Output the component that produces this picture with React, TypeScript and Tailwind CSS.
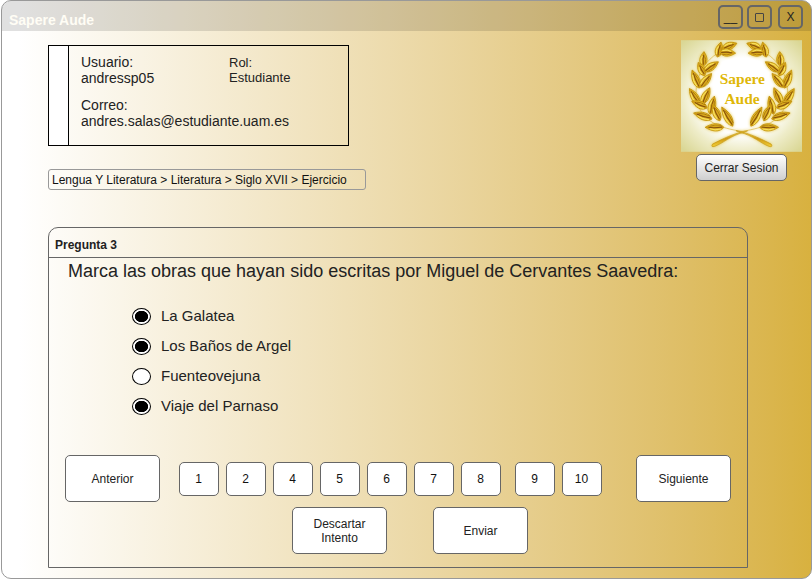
import { useState } from "react";

const LEAVES: [number, number, number, number][] = [
  [143, 148, -76, 46],
  [174, 137, -20, 46],
  [168, 157, 4, 48],
  [96, 176, -86, 44],
  [90, 206, -116, 44],
  [119, 199, -34, 52],
  [73, 236, -112, 58],
  [103, 240, -50, 54],
  [69, 288, -122, 56],
  [103, 286, -64, 54],
  [84, 312, -156, 50],
  [122, 314, -76, 56],
  [94, 346, -162, 58],
  [134, 336, -114, 54],
  [129, 380, 180, 56],
  [167, 348, -120, 66],
];

function Leaf({ x, y, angle, length }: { x: number; y: number; angle: number; length: number }) {
  const h = length / 2;
  return (
    <g transform={`translate(${x} ${y}) rotate(${angle})`}>
      <path
        d={`M${-h} 0C${-h / 2} -16 ${h / 4} -13 ${h} 0C${h / 4} 13 ${-h / 2} 16 ${-h} 0Z`}
        fill="url(#leafGold)"
        stroke="#c4940c"
        strokeWidth="2.5"
      />
      <path d={`M${-h + 5} 1Q0 -3 ${h - 10} 0`} fill="none" stroke="#84500a" strokeWidth="3" />
      <path d={`M${-h + 8} 6Q0 9 ${h - 14} 3`} fill="none" stroke="#a8740c" strokeWidth="2.5" />
      <path d={`M${-h + 8} -5Q0 -10 ${h - 14} -4`} fill="none" stroke="#fbe56a" strokeWidth="2.5" />
    </g>
  );
}

function Branch() {
  return (
    <g>
      <path
        d="M216 393C160 384 100 372 78 310C66 262 78 190 150 152"
        fill="none"
        stroke="#d8b440"
        strokeWidth="2"
      />
      {LEAVES.map(([x, y, angle, length]) => (
        <Leaf key={`${x}-${y}`} x={x} y={y} angle={angle} length={length} />
      ))}
      <path
        d="M228 390C190 396 150 416 123 430Q117 440 129 437C154 428 178 404 216 395Z"
        fill="url(#leafGold)"
        stroke="#c4940c"
        strokeWidth="2"
      />
    </g>
  );
}

function Logo() {
  return (
    <svg viewBox="29 120 361 333" className="h-[112px] w-[121px]" role="img" aria-label="Sapere Aude">
      <defs>
        <radialGradient id="glow" cx="50%" cy="50%" r="68%">
          <stop offset="0.5" stopColor="#ffffff" />
          <stop offset="0.72" stopColor="#eeecc8" />
          <stop offset="1" stopColor="#dad795" />
        </radialGradient>
        <linearGradient id="leafGold" x1="0" y1="0" x2="0" y2="1">
          <stop offset="0" stopColor="#f7dc45" />
          <stop offset="0.5" stopColor="#cf9a14" />
          <stop offset="1" stopColor="#f2ce36" />
        </linearGradient>
        <filter id="halo" x="-10%" y="-10%" width="120%" height="120%">
          <feDropShadow dx="0" dy="0" stdDeviation="4" floodColor="#e6c84a" />
        </filter>
      </defs>
      <rect x="29" y="120" width="361" height="333" fill="url(#glow)" />
      <g filter="url(#halo)">
        <Branch />
        <g transform="translate(421 0) scale(-1 1)">
          <Branch />
        </g>
      </g>
      <g fill="#dfb808" fontFamily="Liberation Serif, serif" fontWeight="700" fontSize="46" textAnchor="middle">
        <text x="212" y="251">Sapere</text>
        <text x="211" y="311">Aude</text>
      </g>
    </svg>
  );
}

const OPTIONS = ["La Galatea", "Los Baños de Argel", "Fuenteovejuna", "Viaje del Parnaso"];

const ACTION =
  "h-[47px] w-[95px] shrink-0 rounded-[5px] border border-[#666] bg-white px-4 text-[12px] leading-[14px] text-[#222]";
const PAGE = "h-[34px] w-10 rounded-[5px] border border-[#666] bg-white text-[12px] leading-[14px] text-[#111]";
const CONTROL =
  "flex h-6 w-[25px] items-center justify-center rounded-[5px] border-2 border-[#666] text-[12px] leading-[14px] text-[#222]";

function PageButtons({ pages }: { pages: number[] }) {
  return (
    <div className="flex gap-[7px]">
      {pages.map((n) => (
        <button key={n} type="button" className={PAGE}>
          {n}
        </button>
      ))}
    </div>
  );
}

export default function App() {
  const [marked, setMarked] = useState([true, true, false, true]);
  const toggle = (i: number) => setMarked(marked.map((m, k) => (k === i ? !m : m)));

  return (
    <div className="bg-white pl-px font-['Liberation_Sans',Arial,sans-serif] text-[#222]">
      <div className="overflow-hidden rounded-[10px] border border-[#999] bg-linear-to-r from-white from-2% to-[#d8b13f] pb-[10px]">
        <header className="flex h-[30px] items-center justify-between bg-black/12 pt-[2px] pr-2 pl-[7px]">
          <h1 className="pt-[6px] text-[14px] leading-4 font-bold text-[#fffdf5]">Sapere Aude</h1>
          <div className="flex gap-1">
            <button type="button" aria-label="Minimizar" className={CONTROL}>
              __
            </button>
            <button type="button" aria-label="Maximizar" className={CONTROL}>
              <span className="size-[9px] rounded-[1px] border border-[#444]" />
            </button>
            <button type="button" aria-label="Cerrar" className={`${CONTROL} ml-[2px]`}>
              X
            </button>
          </div>
        </header>

        <main className="pr-[9px] pl-[46px]">
          <div className="flex items-start justify-between">
            <div className="pt-[14px]">
              <section className="flex h-[101px] w-[301px] border border-black">
                <div className="w-5 shrink-0 border-r border-black bg-white" />
                <div className="flex-1 pt-2 pl-3">
                  <div className="flex items-end">
                    <p className="w-[148px] text-[14px] leading-4">
                      Usuario:
                      <br />
                      andressp05
                    </p>
                    <p className="pb-px text-[13px] leading-[15px]">
                      Rol:
                      <br />
                      Estudiante
                    </p>
                  </div>
                  <p className="pt-[11px] text-[14px] leading-4">
                    Correo:
                    <br />
                    andres.salas@estudiante.uam.es
                  </p>
                </div>
              </section>
              <nav
                aria-label="Ruta"
                className="mt-[23px] h-[21px] w-[318px] rounded-[3px] border border-[#999] pl-[3px] text-[12px] leading-5 text-[#111]"
              >
                Lengua Y Literatura &gt; Literatura &gt; Siglo XVII &gt; Ejercicio
              </nav>
            </div>
            <div className="flex flex-col items-center gap-[2px] pt-[9px]">
              <Logo />
              <button
                type="button"
                className="h-[27px] w-[91px] rounded-[5px] border border-[#666] bg-linear-to-b from-white to-[#cfcfcf] text-[12px] leading-[14px]"
              >
                Cerrar Sesion
              </button>
            </div>
          </div>

          <section className="mt-[37px] mr-[54px] rounded-t-[10px] border border-[#666] pb-[13px]">
            <h2 className="h-[30px] border-b border-[#666] pt-[10px] pl-[6px] text-[12px] leading-[14px] font-bold">
              Pregunta 3
            </h2>
            <fieldset>
              <legend className="pt-[3px] pl-[19px] text-[18px] leading-5">
                Marca las obras que hayan sido escritas por Miguel de Cervantes Saavedra:
              </legend>
              <div className="flex flex-col items-start pt-5 pl-[83px]">
                {OPTIONS.map((option, i) => (
                  <label key={option} className="flex h-[30px] items-center gap-[10px] text-[15px] leading-[18px]">
                    <input
                      type="checkbox"
                      checked={marked[i]}
                      onChange={() => toggle(i)}
                      className="h-[17px] w-[19px] appearance-none rounded-[50%] border border-black bg-white bg-radial-[7px_6px_at_center] from-white from-90% to-white checked:from-black"
                    />
                    {option}
                  </label>
                ))}
              </div>
            </fieldset>

            <div className="flex items-center justify-between pt-[34px] pr-4 pl-4">
              <button type="button" className={ACTION}>
                Anterior
              </button>
              <div className="flex gap-[14px] pr-4">
                <PageButtons pages={[1, 2, 4, 5, 6, 7, 8]} />
                <PageButtons pages={[9, 10]} />
              </div>
              <button type="button" className={ACTION}>
                Siguiente
              </button>
            </div>
            <div className="flex justify-center gap-[46px] pt-[5px] pl-6">
              <button type="button" className={ACTION}>
                Descartar Intento
              </button>
              <button type="button" className={ACTION}>
                Enviar
              </button>
            </div>
          </section>
        </main>
      </div>
    </div>
  );
}
